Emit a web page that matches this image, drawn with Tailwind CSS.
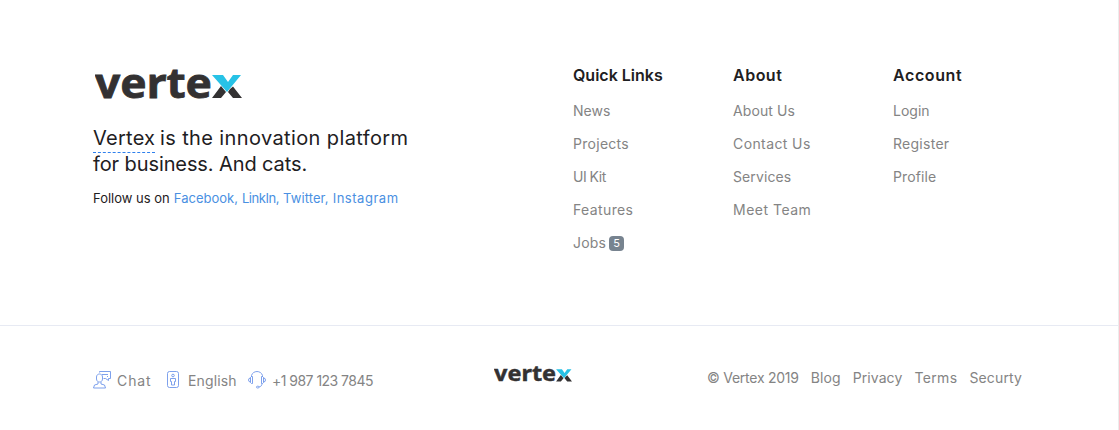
<!DOCTYPE html>
<html lang="en">
<head>
<meta charset="utf-8">
<title>Vertex</title>
<script src="https://cdn.jsdelivr.net/npm/@tailwindcss/browser@4"></script>
</head>
<body class="bg-white font-['Inter','Open_Sans',sans-serif] text-[#1e2022]">
<svg class="hidden">
  <symbol id="logo" viewBox="0 0 147 32">
    <text x="0" y="30" textLength="117" lengthAdjust="spacingAndGlyphs" font-family="Noto Sans, Open Sans, sans-serif" font-weight="700" font-size="41" fill="#333132" stroke="#333132" stroke-width=".8">verte</text>
    <path d="M117 7h11l5 7 5-7h8l-14 17z" fill="#27c2e6"/>
    <path d="M126 18l5 6-5 6h-9zM135 21l3-2.500 9 11.500h-9l-5-6z" fill="#333132"/>
  </symbol>
</svg>
<footer class="h-[430px] w-full border-r border-[#ececec]">
  <div class="flex h-[325px] px-[93px] pt-[62px]">
    <div class="w-[480px]">
      <svg class="ml-[2px] mt-[6px] h-8 w-[147px]"><use href="#logo"/></svg>
      <p class="mt-[25px] flex gap-[5px] whitespace-nowrap text-[20px] leading-[26px]"><a class="h-[28px] w-[62px] border-b border-dashed border-[#2f80ed] tracking-[0.25px]">Vertex</a><span class="tracking-[0.38px]">is the innovation platform</span></p>
      <p class="-mt-[2px] whitespace-nowrap text-[20px] leading-[26px] tracking-[-0.1px]">for business. And cats.</p>
      <p class="mt-[11px] flex gap-1 whitespace-nowrap text-[13px] leading-5"><span>Follow us on</span><a class="text-[#4a90e2]">Facebook,</a><a class="tracking-[-0.45px] text-[#4a90e2]">LinkIn,</a><a class="tracking-[0.1px] text-[#4a90e2]">Twitter,</a><a class="tracking-[0.53px] text-[#4a90e2]">Instagram</a></p>
    </div>
    <nav class="w-40 text-[14px] leading-[33px] text-[#848484]">
      <h2 class="mb-[5px] text-[16px] font-semibold leading-[27px] text-[#1e2022]">Quick Links</h2>
      <ul><li>News</li><li class="tracking-[0.28px]">Projects</li><li class="tracking-[-0.5px]">UI Kit</li><li class="tracking-[0.38px]">Features</li><li class="flex items-center gap-[3px]"><span class="tracking-[0.2px]">Jobs</span><span class="mt-[2px] flex h-[15px] w-[15px] items-center justify-center rounded bg-[#77838f] text-[11px] leading-none text-white">5</span></li></ul>
    </nav>
    <nav class="w-40 text-[14px] leading-[33px] text-[#848484]">
      <h2 class="mb-[5px] text-[16px] font-semibold leading-[27px] tracking-[0.5px] text-[#1e2022]">About</h2>
      <ul><li class="tracking-[0.1px]">About Us</li><li class="tracking-[0.4px]">Contact Us</li><li class="tracking-[0.1px]">Services</li><li class="tracking-[0.5px]">Meet Team</li></ul>
    </nav>
    <nav class="text-[14px] leading-[33px] text-[#848484]">
      <h2 class="mb-[5px] text-[16px] font-semibold leading-[27px] tracking-[0.6px] text-[#1e2022]">Account</h2>
      <ul><li>Login</li><li class="tracking-[0.27px]">Register</li><li class="tracking-[0.1px]">Profile</li></ul>
    </nav>
  </div>
  <div class="flex border-t border-[#e7eaf3] pl-[93px] text-[14px] leading-5 text-[#848484]">
    <div class="mt-[45px] flex w-[401px] whitespace-nowrap">
      <div class="flex w-[72px]"><svg class="mr-[6px] h-[18px] w-[18px]" viewBox="0 0 18 18" fill="none" stroke="#6f96ea" stroke-width=".9"><path d="M6.500 1.500v-1h11v7h-2v2l-3-2h-2M9 3.500h6M14 5.500h1M3.500 6c0-4 6-4 6 0v2c0 4-6 4-6 0zM5 11v2L1.500 14 .5 17h12L11.500 14 8 13v-2"/></svg><span class="tracking-[0.9px]">Chat</span></div>
      <div class="flex w-[83px]"><svg class="mr-[5px] h-[18px] w-[18px]" viewBox="0 0 18 18" fill="none" stroke="#6f96ea" stroke-width=".9"><rect x="2.500" y=".5" width="11" height="16" rx="2"/><circle cx="8" cy="4.500" r="1.300"/><path d="M5.500 7.500h5v3h-1v3.500h-3v-3.500h-1z"/></svg><span class="tracking-[0.15px]">English</span></div>
      <div class="flex"><svg class="mr-[6px] h-[18px] w-[18px]" viewBox="0 0 18 18" fill="none" stroke="#6f96ea" stroke-width=".9"><path d="M3.500 6V4.500C5-.8 13-.8 14.500 4.500V6M4.500 5.500v7h-1l-1-1v-5l1-1zM2.500 7Q.5 7 .5 9t2 2M13.500 5.500v7h1l1-1v-5l-1-1zM15.500 7q2 0 2 2t-2 2M14 12.500c0 2-1 3-3 3.500"/><rect x="8.500" y="15.200" width="2.500" height="1.800" rx=".9"/></svg><span class="tracking-[-0.53px]">+1 987 123 7845</span></div>
    </div>
    <svg class="mt-[39px] h-[18px] w-[78px]"><use href="#logo"/></svg>
    <div class="ml-[135px] mt-[42px] flex gap-3 whitespace-nowrap"><span class="tracking-[-0.25px]">© Vertex 2019</span><a class="tracking-[0.1px]">Blog</a><a class="tracking-[0.1px]">Privacy</a><a class="tracking-[0.35px]">Terms</a><a class="tracking-[0.15px]">Securty</a></div>
  </div>
</footer>
</body>
</html>
